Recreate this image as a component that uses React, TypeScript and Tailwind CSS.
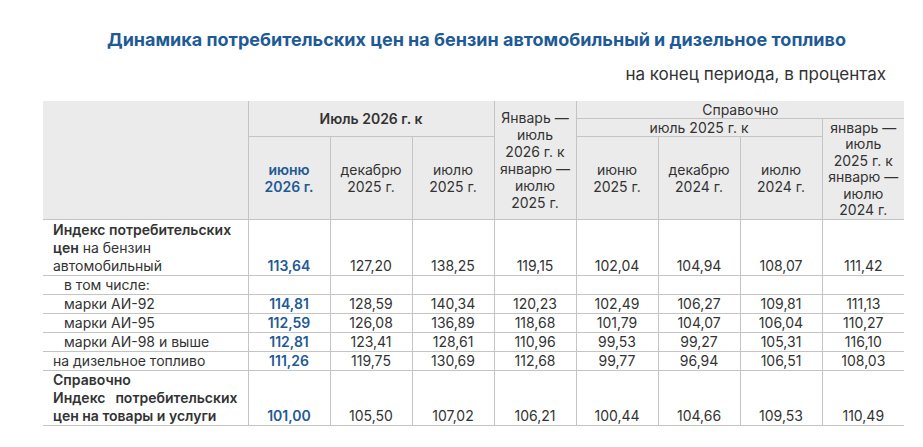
const cols = [
  "июню 2026 г.",
  "декабрю 2025 г.",
  "июлю 2025 г.",
  "",
  "июню 2025 г.",
  "декабрю 2024 г.",
  "июлю 2024 г.",
  "",
]

type Row = {
  label: React.ReactNode
  values: string[]
  h: string
  indent?: boolean
}

const rows: Row[] = [
  {
    label: (
      <>
        <b className="font-semibold">Индекс потребительских</b>
        <br />
        <b className="font-semibold">цен</b> на бензин
        <br />
        автомобильный
      </>
    ),
    values: ["113,64", "127,20", "138,25", "119,15", "102,04", "104,94", "108,07", "111,42"],
    h: "h-[56px]",
  },
  { label: "в том числе:", values: ["", "", "", "", "", "", "", ""], h: "h-[19px]", indent: true },
  {
    label: "марки АИ-92",
    values: ["114,81", "128,59", "140,34", "120,23", "102,49", "106,27", "109,81", "111,13"],
    h: "h-[19px]",
    indent: true,
  },
  {
    label: "марки АИ-95",
    values: ["112,59", "126,08", "136,89", "118,68", "101,79", "104,07", "106,04", "110,27"],
    h: "h-[19px]",
    indent: true,
  },
  {
    label: "марки АИ-98 и выше",
    values: ["112,81", "123,41", "128,61", "110,96", "99,53", "99,27", "105,31", "116,10"],
    h: "h-[19px]",
    indent: true,
  },
  {
    label: "на дизельное топливо",
    values: ["111,26", "119,75", "130,69", "112,68", "99,77", "96,94", "106,51", "108,03"],
    h: "h-[18px]",
  },
  {
    label: (
      <span className="block font-semibold">
        Справочно
        <span className="flex justify-between">
          <span>Индекс</span>
          <span>потребительских</span>
        </span>
        цен на товары и услуги
      </span>
    ),
    values: ["101,00", "105,50", "107,02", "106,21", "100,44", "104,66", "109,53", "110,49"],
    h: "h-[55px]",
  },
]

export default function App() {
  return (
    <div className="h-[447px] w-[923px] overflow-hidden bg-white font-['Inter',sans-serif] text-[#333]">
      <h1 className="pl-[107px] pt-[28px] text-[18px] font-bold leading-[24px] text-[#1e5a96]">
        Динамика потребительских цен на бензин автомобильный и дизельное топливо
      </h1>
      <p className="mt-[12px] pr-[37px] text-right text-[17px] leading-[20px] text-[#333]">
        на конец периода, в процентах
      </p>

      <table className="ml-[43px] mt-[17px] w-[860px] table-fixed border-collapse text-[14px]">
        <colgroup>
          <col className="w-[205px]" />
          {cols.map((_, i) => (
            <col key={i} className="w-[82px]" />
          ))}
        </colgroup>
        <thead className="bg-[#ebebeb] text-center leading-[17px]">
          <tr className="h-[17px]">
            <th rowSpan={3} className="border-b border-r border-[#c4c4c4]"></th>
            <th
              colSpan={3}
              rowSpan={2}
              className="border-b border-r border-[#c4c4c4] font-semibold"
            >
              Июль 2026 г. к
            </th>
            <th rowSpan={3} className="border-b border-r border-[#c4c4c4] px-1 font-normal">
              Январь —<br />
              июль
              <br />
              2026 г. к<br />
              январю —<br />
              июлю
              <br />
              2025 г.
            </th>
            <th colSpan={4} className="border-b border-[#c4c4c4] font-normal">
              Справочно
            </th>
          </tr>
          <tr className="h-[18px]">
            <th colSpan={3} className="border-b border-r border-[#c4c4c4] font-normal">
              июль 2025 г. к
            </th>
            <th rowSpan={2} className="border-b border-[#c4c4c4] px-1 font-normal leading-[16.5px]">
              январь —<br />
              июль
              <br />
              2025 г. к<br />
              январю —<br />
              июлю
              <br />
              2024 г.
            </th>
          </tr>
          <tr className="h-[83px]">
            {[0, 1, 2, 4, 5, 6].map((i) => (
              <th
                key={i}
                className={
                  i === 0
                    ? "border-b border-r border-[#c4c4c4] px-2 font-semibold text-[#1e5a96]"
                    : "border-b border-r border-[#c4c4c4] px-2 font-normal"
                }
              >
                {cols[i].replace(/ (\d{4} г\.)/, "\n$1")
                  .split("\n")
                  .map((t, k) => (
                    <span key={k} className="block">
                      {t}
                    </span>
                  ))}
              </th>
            ))}
          </tr>
        </thead>
        <tbody className="leading-[18px]">
          {rows.map((row, r) => (
            <tr key={r} className={`${row.h} border-b border-[#c4c4c4]`}>
              <td
                className={`border-r border-[#c4c4c4] pr-[10px] align-bottom ${
                  row.indent ? "pl-[21px]" : "pl-[10px]"
                }`}
              >
                {row.label}
              </td>
              {row.values.map((v, i) => (
                <td
                  key={i}
                  className={`text-center align-bottom ${i < 7 ? "border-r border-[#c4c4c4]" : ""} ${
                    i === 0 ? "font-semibold text-[#1e5a96]" : ""
                  }`}
                >
                  {v}
                </td>
              ))}
            </tr>
          ))}
        </tbody>
      </table>
    </div>
  )
}
